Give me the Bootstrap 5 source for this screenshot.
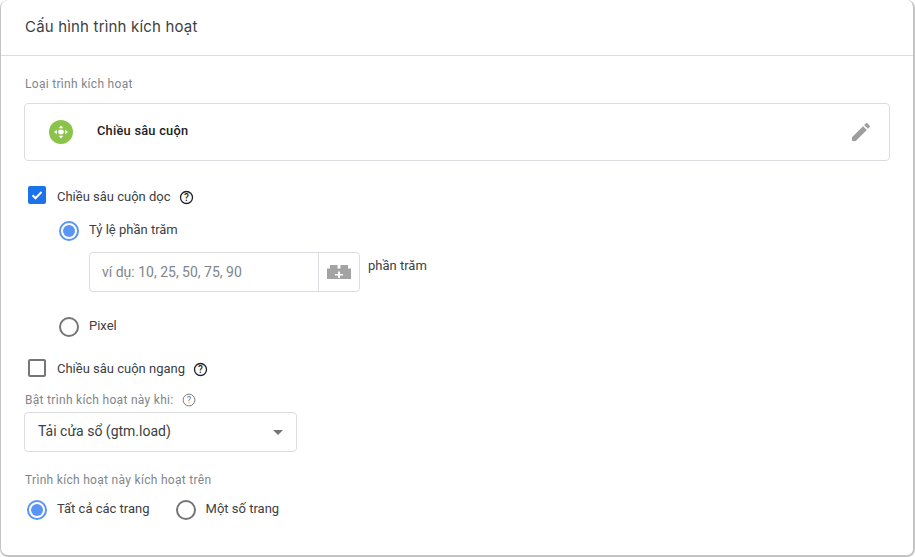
<!DOCTYPE html>
<html lang="vi">
<head>
<meta charset="utf-8">
<title>Cấu hình trình kích hoạt</title>
<link href="https://cdn.jsdelivr.net/npm/bootstrap@5.3.0/dist/css/bootstrap.min.css" rel="stylesheet">
<style>
html,body{height:557px;overflow:hidden;background:#fff}
body{font-family:Roboto,"Liberation Sans",sans-serif;font-size:13px;color:#3c4043}
.panel{width:915px;height:557px;background:#fff;border:1px solid #c4c4c4;border-width:0 2px 2px 1px;border-radius:8px;overflow:hidden}
.panel-head{height:56px;padding:0 24px;border-bottom:1px solid #dadce0;font-family:Inter,"Open Sans",sans-serif;font-size:15px;letter-spacing:.18px;color:#3c4043}
.panel-body{padding:20px 23px 0 23px}
.muted-label{color:#80868b;font-size:12px;line-height:16px;letter-spacing:.3px;margin-left:1px}
.type-box{height:58px;margin-top:11px;border:1px solid #dadce0;border-radius:4px;padding:0 16px 0 24px}
.type-name{font-weight:500;font-size:12.800px;line-height:16px;margin-top:-2px;color:#202124;margin-left:24px;letter-spacing:.25px}
.check-row{height:24px;margin-left:4px;gap:11px}
.box{width:18px;height:18px;border:2px solid #757575;border-radius:2px;flex:none;margin-top:-2px;margin-bottom:2px}
.box-low{margin-top:-1px;margin-bottom:1px}
.box.on{background:#1a73e8;border-color:#1a73e8;display:flex;align-items:center;justify-content:center}
.radio-mark{width:20px;height:20px;border:2px solid #757575;border-radius:50%;flex:none;display:flex;align-items:center;justify-content:center;margin-top:1px;margin-bottom:-1px}
.radio-mark.on{border-color:#5a95f5}
.radio-mark.on::after{content:"";width:12px;height:12px;border-radius:50%;background:#5a95f5}
.row-text{line-height:16px}
.help-gap{margin-left:-3px}
.radio-row{gap:10px}
.indent-a{margin-left:35px}
.num-group{width:271px;height:40px;margin-left:30px;border:1px solid #dadce0;border-radius:4px;flex:none}
.num-ph{flex:1;padding-left:12px;color:#80868b;font-size:14px;line-height:38px}
.num-btn{width:41px;border-left:1px solid #dadce0}
.unit{margin:0 0 0 8px;line-height:16px;padding-top:6px}
.sel-box{width:273px;height:40px;border:1px solid #dadce0;border-radius:4px;padding:0 13px 0 13px;margin-top:4px;font-size:14px;color:#3c4043}
.sel-text{margin-bottom:2px}
.caret-down{width:0;height:0;border-left:5px solid transparent;border-right:5px solid transparent;border-top:5px solid #757575}
.sp-a{margin-top:24px}.sp-b{margin-top:11px}.sp-c{margin-top:12px}.sp-d{margin-top:24px}.sp-e{margin-top:21px}.sp-f{margin-top:11px}.sp-g{margin-top:20px}.sp-h{margin-top:11px}
.target-row{margin-left:3px}
.second-choice{margin-left:26px}
</style>
</head>
<body>
<div class="panel">
  <div class="panel-head d-flex align-items-center">Cấu hình trình kích hoạt</div>
  <div class="panel-body">
    <div class="muted-label">Loại trình kích hoạt</div>
    <div class="type-box d-flex align-items-center">
      <svg width="24" height="24" viewBox="0 0 24 24" aria-hidden="true"><circle cx="12" cy="12" r="12" fill="#8bc34a"/><g fill="#fff"><ellipse cx="12" cy="12" rx="2.800" ry="2.400"/><path d="M12 5.500l2.300 2.700H9.700zM12 18.500l-2.300-2.700h4.600zM5 12l2.800-2.300v4.600zM19 12l-2.800 2.300V9.700z"/></g></svg>
      <div class="type-name flex-grow-1">Chiều sâu cuộn</div>
      <svg width="24" height="24" viewBox="0 0 24 24" fill="#9e9e9e" aria-hidden="true"><path d="M3 17.250V21h3.750L17.810 9.940l-3.750-3.750L3 17.250zM20.710 7.040a1 1 0 0 0 0-1.410l-2.340-2.340a1 1 0 0 0-1.410 0l-1.830 1.830 3.750 3.750 1.830-1.830z"/></svg>
    </div>

    <div class="check-row d-flex align-items-center sp-a">
      <span class="box on"><svg width="14" height="14" viewBox="0 0 14 14" aria-hidden="true"><path d="M2.500 7.200l3 3 6-6.200" fill="none" stroke="#fff" stroke-width="2"/></svg></span>
      <span class="row-text">Chiều sâu cuộn dọc</span>
      <svg class="help-gap" width="15" height="15" viewBox="0 0 15 15" aria-hidden="true"><circle cx="7.500" cy="7.500" r="6" fill="none" stroke="#202124" stroke-width="1.300"/><text x="7.500" y="11" text-anchor="middle" font-family="Roboto" font-size="10" font-weight="500" fill="#202124">?</text></svg>
    </div>
    <div class="radio-row d-flex align-items-center sp-b indent-a">
      <span class="radio-mark on"></span><span class="row-text">Tỷ lệ phần trăm</span>
    </div>
    <div class="d-flex sp-c indent-a">
      <div class="num-group d-flex">
        <div class="num-ph">ví dụ: 10, 25, 50, 75, 90</div>
        <div class="num-btn d-flex align-items-center justify-content-center">
          <svg width="24" height="14" viewBox="0 0 24 14" aria-hidden="true"><path fill="#a3a3a3" d="M0 3.500h3V0h7.500v3.500h3V0H21v3.500h3V14H0z"/><path fill="#fff" d="M11 6.500h2v2.500h3v1.500h-3V13h-2v-2.500H8V9h3z"/></svg>
        </div>
      </div>
      <div class="unit">phần trăm</div>
    </div>
    <div class="radio-row d-flex align-items-center sp-d indent-a">
      <span class="radio-mark"></span><span class="row-text">Pixel</span>
    </div>
    <div class="check-row d-flex align-items-center sp-e">
      <span class="box box-low"></span>
      <span class="row-text">Chiều sâu cuộn ngang</span>
      <svg class="help-gap" width="15" height="15" viewBox="0 0 15 15" aria-hidden="true"><circle cx="7.500" cy="7.500" r="6" fill="none" stroke="#202124" stroke-width="1.300"/><text x="7.500" y="11" text-anchor="middle" font-family="Roboto" font-size="10" font-weight="500" fill="#202124">?</text></svg>
    </div>
    <div class="d-flex align-items-center gap-2 muted-label sp-f">
      <span>Bật trình kích hoạt này khi:</span>
      <svg width="14" height="14" viewBox="0 0 15 15" aria-hidden="true"><circle cx="7.500" cy="7.500" r="6.300" fill="none" stroke="#757575" stroke-width="1"/><text x="7.500" y="11" text-anchor="middle" font-family="Roboto" font-size="10" fill="#757575">?</text></svg>
    </div>
    <div class="sel-box d-flex align-items-center justify-content-between">
      <span class="sel-text">Tải cửa sổ (gtm.load)</span><span class="caret-down"></span>
    </div>
    <div class="muted-label sp-g">Trình kích hoạt này kích hoạt trên</div>
    <div class="d-flex align-items-center sp-h target-row">
      <div class="radio-row d-flex align-items-center"><span class="radio-mark on"></span><span class="row-text">Tất cả các trang</span></div>
      <div class="radio-row d-flex align-items-center second-choice"><span class="radio-mark"></span><span class="row-text">Một số trang</span></div>
    </div>
  </div>
</div>
<script src="https://cdn.jsdelivr.net/npm/bootstrap@5.3.0/dist/js/bootstrap.bundle.min.js"></script>
</body>
</html>
